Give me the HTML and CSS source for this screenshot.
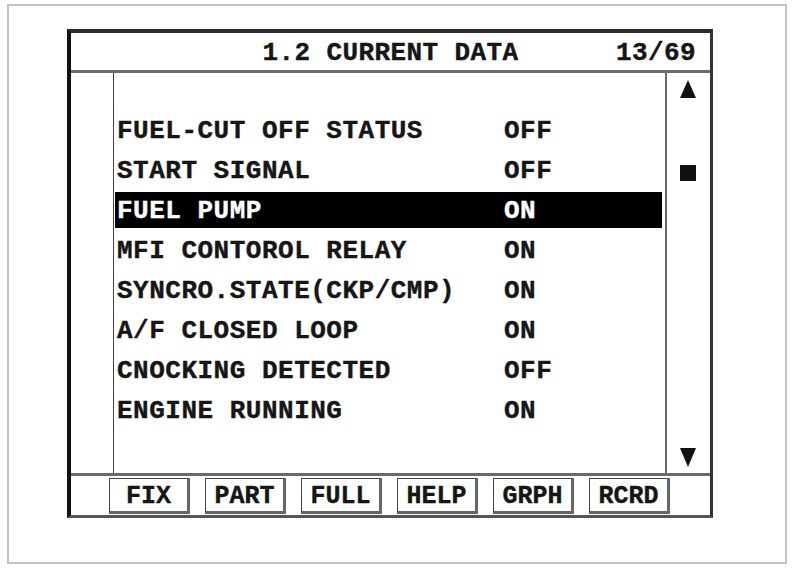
FILE: index.html
```html
<!DOCTYPE html>
<html>
<head>
<meta charset="utf-8">
<link rel="stylesheet" href="styles.css">
</head>
<body>
<div class="sheet">
  <div class="device">
    <div class="header">
      <div class="title">1.2 CURRENT DATA</div>
      <div class="page-no">13/69</div>
    </div>
    <div class="body">
      <div class="gutter"></div>
      <div class="list">
        <div class="row"><span class="label">FUEL-CUT OFF STATUS</span><span class="value">OFF</span></div>
        <div class="row"><span class="label">START SIGNAL</span><span class="value">OFF</span></div>
        <div class="row selected"><span class="label">FUEL PUMP</span><span class="value">ON</span></div>
        <div class="row"><span class="label">MFI CONTOROL RELAY</span><span class="value">ON</span></div>
        <div class="row"><span class="label">SYNCRO.STATE(CKP/CMP)</span><span class="value">ON</span></div>
        <div class="row"><span class="label">A/F CLOSED LOOP</span><span class="value">ON</span></div>
        <div class="row"><span class="label">CNOCKING DETECTED</span><span class="value">OFF</span></div>
        <div class="row"><span class="label">ENGINE RUNNING</span><span class="value">ON</span></div>
      </div>
      <div class="scroll">
        <svg class="arrow-up" width="16" height="18" viewBox="0 0 16 18"><polygon points="8,0 16,18 0,18" fill="#111"/></svg>
        <div class="thumb"></div>
        <svg class="arrow-down" width="16" height="19" viewBox="0 0 16 19"><polygon points="0,0 16,0 8,19" fill="#111"/></svg>
      </div>
    </div>
    <div class="buttons">
      <div class="btn">FIX</div>
      <div class="btn">PART</div>
      <div class="btn">FULL</div>
      <div class="btn">HELP</div>
      <div class="btn">GRPH</div>
      <div class="btn">RCRD</div>
    </div>
  </div>
</div>
</body>
</html>
```
FILE: styles.css
```css
* { box-sizing: border-box; }
html, body { margin: 0; padding: 0; background: #fff; }
body {
  font-family: "Liberation Mono", "Courier New", monospace;
  font-weight: bold;
  color: #161616;
  padding: 4px 0 0 7px;
  -webkit-text-stroke: 0.4px #161616;
}
.sheet {
  width: 780px;
  height: 560px;
  border: 2px solid #c4c4c4;
  padding: 23px 0 0 58px;
}
.device {
  width: 646px;
  height: 489px;
  border-top: 4px solid #2b2b2b;
  border-left: 4px solid #111;
  border-right: 3px solid #333;
  border-bottom: 3px solid #555;
  display: flex;
  flex-direction: column;
}
.header {
  height: 40px;
  border-bottom: 3px solid #6a6a6a;
  display: flex;
  align-items: center;
  justify-content: center;
  position: relative;
  font-size: 26px;
  letter-spacing: 0.4px;
}
.title { padding-top: 2px; }
.page-no {
  position: absolute;
  right: 14px;
  top: 0;
  bottom: 0;
  display: flex;
  align-items: center;
  padding-top: 2px;
}
.body {
  height: 400px;
  display: flex;
}
.gutter {
  width: 43px;
  border-right: 1px solid #444;
}
.list {
  width: 553px;
  border-right: 2px solid #6a6a6a;
  padding-top: 37px;
  display: flex;
  flex-direction: column;
  font-size: 26px;
  letter-spacing: 0.5px;
}
.row {
  height: 36px;
  margin: 2px 3px 2px 1px;
  display: flex;
  align-items: center;
  padding-left: 2px;
  padding-top: 2px;
  white-space: pre;
}
.row.selected { background: #000; color: #fff; -webkit-text-stroke: 0.4px #fff; }
.label { width: 387px; }
.scroll {
  flex: 1;
  display: flex;
  flex-direction: column;
  align-items: center;
  padding: 7px 2px 6px 0;
}
.arrow-up, .arrow-down { display: block; }
.thumb {
  width: 16px;
  height: 16px;
  background: #111;
  margin-top: 67px;
}
.arrow-down { margin-top: auto; }
.buttons {
  flex: 1;
  border-top: 3px solid #6a6a6a;
  display: flex;
  gap: 15px;
  padding: 2px 0 0 38px;
}
.btn {
  width: 81px;
  height: 36px;
  border-top: 1px solid #444;
  border-left: 1px solid #444;
  border-right: 3px solid #666;
  border-bottom: 3px solid #666;
  display: flex;
  align-items: center;
  justify-content: center;
  font-size: 25px;
  padding-top: 2px;
}
```
